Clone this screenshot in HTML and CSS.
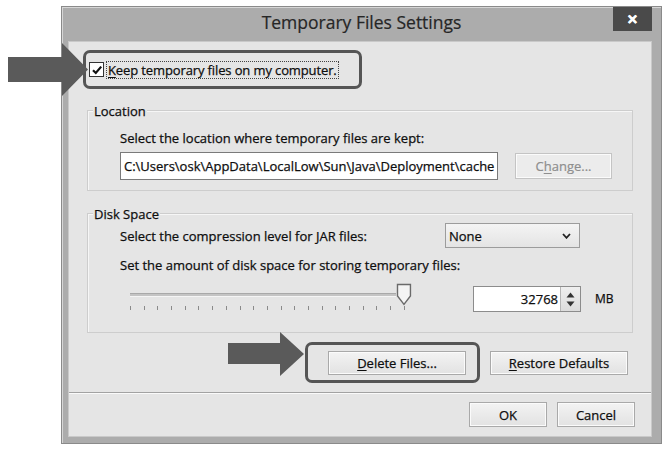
FILE: index.html
```html
<!DOCTYPE html>
<html>
<head>
<meta charset="utf-8">
<link rel="stylesheet" href="styles.css">
</head>
<body>
<div class="screen">
  <div class="window">
    <div class="titlebar">
      <span class="tb-spacer"></span>
      <span class="title">Temporary Files Settings</span>
      <span class="close">&#x2715;</span>
    </div>
    <div class="client">
      <div class="keep-row">
        <div class="highlight hl-keep">
          <span class="checkbox"><svg width="12" height="12" viewBox="0 0 12 12"><path d="M2 6.2 L4.8 9 L10.2 2.6" fill="none" stroke="#111" stroke-width="2.2"/></svg></span>
          <span class="keep-label"><u>K</u>eep temporary files on my computer.</span>
        </div>
      </div>

      <div class="group group-loc">
        <div class="legend">Location</div>
        <div class="line line-loc">Select the location where temporary files are kept:</div>
        <div class="path-row">
          <div class="path">C:\Users\osk\AppData\LocalLow\Sun\Java\Deployment\cache</div>
          <div class="btn btn-change">C<u>h</u>ange...</div>
        </div>
      </div>

      <div class="group group-disk">
        <div class="legend">Disk Space</div>
        <div class="comp-row">
          <span class="comp-label">Select the compression level for JAR files:</span>
          <div class="select"><span>None</span><svg width="9" height="6" viewBox="0 0 9 6"><path d="M1 1 L4.5 4.8 L8 1" fill="none" stroke="#222" stroke-width="1.8"/></svg></div>
        </div>
        <div class="line line-amount">Set the amount of disk space for storing temporary files:</div>
        <div class="slider-row">
          <div class="slider">
            <div class="track-row">
              <div class="track"></div>
              <svg class="thumb" width="16" height="23" viewBox="0 0 16 23"><path d="M1.5 1.5 H14.5 V13 L8 21.5 L1.5 13 Z" fill="#f4f4f4" stroke="#6a6a6a" stroke-width="1.4"/></svg>
            </div>
            <div class="ticks">
              <i></i><i></i><i></i><i></i><i></i><i></i><i></i><i></i><i></i><i></i><i></i><i></i><i></i><i></i><i></i><i></i><i></i><i></i><i></i><i></i><i></i>
            </div>
          </div>
          <div class="spinner">
            <span class="spin-value">32768</span>
            <span class="spin-btns">
              <svg width="9" height="6" viewBox="0 0 9 6"><path d="M0.5 5.5 L4.5 0.5 L8.5 5.5 Z" fill="#333"/></svg>
              <svg width="9" height="6" viewBox="0 0 9 6"><path d="M0.5 0.5 L4.5 5.5 L8.5 0.5 Z" fill="#333"/></svg>
            </span>
          </div>
          <span class="mb">MB</span>
        </div>
      </div>

      <div class="action-row">
        <div class="highlight hl-delete">
          <div class="btn btn-delete"><u>D</u>elete Files...</div>
        </div>
        <div class="btn btn-restore"><u>R</u>estore Defaults</div>
      </div>

      <div class="separator"></div>

      <div class="footer">
        <div class="btn btn-ok">OK</div>
        <div class="btn btn-cancel">Cancel</div>
      </div>
    </div>
  </div>

  <svg class="arrow arrow-keep" width="92" height="100" viewBox="0 0 92 100"><path d="M8 57 H62 V43 L88 69.5 L62 96 V82 H8 Z" fill="#5a5a5a"/></svg>
  <svg class="arrow arrow-delete" width="310" height="380" viewBox="0 0 310 380"><path d="M228 343 H280 V332 L304 354 L280 376 V364 H228 Z" fill="#5a5a5a"/></svg>
</div>
</body>
</html>
```

FILE: styles.css
```css
* { box-sizing: border-box; }

html, body {
  margin: 0;
  padding: 0;
  background: #ffffff;
}

body {
  font-family: "Open Sans", "Noto Sans", sans-serif;
  font-size: 13px;
  color: #0e0e0e;
  -webkit-text-stroke: 0.25px #0e0e0e;
}

.screen {
  position: relative;
  width: 669px;
  height: 454px;
  overflow: hidden;
  padding-top: 6px;
  padding-left: 61px;
}

.window {
  width: 601px;
  height: 438px;
  border: 1px solid #8a8a8a;
  background: #acacac;
  box-shadow: inset 1px 1px 0 #d6d6d6;
  display: flex;
  flex-direction: column;
}

.titlebar {
  height: 35px;
  display: grid;
  grid-template-columns: 39px 1fr 39px;
  margin: 0 9px;
}

.title {
  text-align: center;
  font-size: 17.5px;
  line-height: 31px;
  color: #262626;
  -webkit-text-stroke: 0.2px #262626;
}

.close {
  height: 24px;
  background: #4a4a4a;
  color: #fff;
  -webkit-text-stroke: 0.6px #fff;
  font-size: 13px;
  font-weight: bold;
  text-align: center;
  line-height: 24px;
}

.client {
  flex: 1;
  margin: 0 10px 7px 7px;
  background: #e5e5e5;
  box-shadow: 0 0 0 1px #c9c9c9;
  display: flex;
  flex-direction: column;
}

.highlight {
  border: 3px solid #555;
  border-radius: 7px;
}

.keep-row {
  padding: 8px 0 0 14px;
}

.hl-keep {
  width: 279px;
  height: 39px;
  display: flex;
  align-items: center;
  padding-left: 3px;
}

.checkbox {
  width: 15px;
  height: 15px;
  border: 1px solid #333;
  background: #fff;
  display: flex;
  align-items: center;
  justify-content: center;
}

.keep-label {
  margin-left: 3px;
  outline: 1px dotted #444;
  line-height: 16px;
  padding: 0 1px;
  letter-spacing: -0.12px;
}

u { text-decoration: underline; text-underline-offset: 2px; }

.group {
  margin-left: 18px;
  width: 546px;
  border: 1px solid #cdcdcd;
  box-shadow: inset 1px 1px 0 #f6f6f6;
  padding-left: 32px;
}

.legend {
  width: fit-content;
  margin: -8px 0 0 -27px;
  padding: 0 1px;
  background: #e5e5e5;
  line-height: 16px;
}

.line { line-height: 16px; }

.group-loc {
  margin-top: 21px;
  height: 81px;
}

.line-loc { margin-top: 11px; }

.path-row {
  margin-top: 6px;
  display: flex;
  align-items: center;
}

.path {
  width: 378px;
  height: 28px;
  background: #fff;
  border: 1px solid #7a7a7a;
  line-height: 26px;
  padding-left: 3px;
  white-space: nowrap;
  overflow: hidden;
}

.btn {
  height: 24px;
  border: 1px solid #a9a9a9;
  background: linear-gradient(#f3f3f3, #e2e2e2);
  box-shadow: inset 0 0 0 1px #fbfbfb;
  display: flex;
  align-items: center;
  justify-content: center;
  line-height: 16px;
}

.btn-change {
  margin-left: 17px;
  width: 97px;
  height: 26px;
  color: #8e8e8e;
  -webkit-text-stroke: 0.2px #8e8e8e;
  border-color: #c4c4c4;
  background: #ececec;
}

.group-disk {
  margin-top: 22px;
  height: 120px;
}

.comp-row {
  margin-top: 1px;
  display: flex;
  align-items: center;
  height: 25px;
}

.comp-label {
  width: 325px;
  line-height: 16px;
}

.select {
  width: 135px;
  height: 25px;
  border: 1px solid #9c9c9c;
  background: linear-gradient(#f4f4f4, #e4e4e4);
  display: flex;
  align-items: center;
  justify-content: space-between;
  padding: 0 8px 0 3px;
}

.line-amount { margin-top: 9px; }

.slider-row {
  margin-top: 10px;
  display: flex;
  align-items: flex-start;
}

.slider {
  margin-left: 10px;
  width: 282px;
}

.track-row {
  display: flex;
  align-items: center;
  height: 23px;
}

.track {
  width: 267px;
  height: 4px;
  background: #c4c4c4;
  border-top: 1px solid #a9a9a9;
  border-bottom: 1px solid #f5f5f5;
}

.thumb { display: block; }

.ticks {
  width: 275px;
  display: flex;
  justify-content: space-between;
}

.ticks i {
  display: block;
  width: 1px;
  height: 4px;
  background: #8a8a8a;
}

.spinner {
  margin-top: 3px;
  margin-left: 61px;
  width: 108px;
  height: 26px;
  border: 1px solid #8c8c8c;
  background: #fff;
  display: flex;
}

.spin-value {
  flex: 1;
  text-align: right;
  line-height: 24px;
  padding-right: 2px;
}

.spin-btns {
  width: 20px;
  background: linear-gradient(#efefef, #dcdcdc);
  border-left: 1px solid #b6b6b6;
  display: flex;
  flex-direction: column;
  align-items: center;
  justify-content: center;
  gap: 3px;
}

.spin-btns svg { display: block; }

.mb {
  margin-left: 14px;
  margin-top: 3px;
  line-height: 26px;
  font-size: 12px;
}

.action-row {
  margin-top: 9px;
  padding-left: 236px;
  display: flex;
  align-items: center;
}

.hl-delete {
  width: 175px;
  height: 41px;
  display: flex;
  align-items: center;
  padding-left: 20px;
}

.btn-delete { width: 138px; }

.btn-restore {
  margin-left: 10px;
  width: 138px;
}

.separator {
  margin-top: 9px;
  height: 2px;
  border-top: 1px solid #a2a2a2;
  border-bottom: 1px solid #fafafa;
}

.footer {
  margin-top: 8px;
  display: flex;
  justify-content: flex-end;
  padding-right: 16px;
  gap: 10px;
}

.btn-ok, .btn-cancel {
  width: 78px;
  height: 25px;
}

.arrow {
  position: absolute;
  left: 0;
  top: 0;
}
```
